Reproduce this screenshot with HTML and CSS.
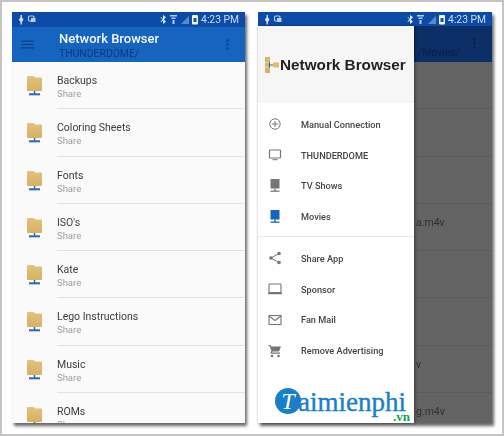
FILE: index.html
```html
<!DOCTYPE html>
<html lang="en">
<head>
<meta charset="utf-8">
<title>Network Browser</title>
<link rel="stylesheet" href="styles.css">
</head>
<body>
<svg class="defs" width="0" height="0" aria-hidden="true">
  <defs>
    <g id="st-left">
      <path d="M2.500 1h1.500v2.500l1.500 2L4 8v2.500H2.500V8L.8 5.500l1.700-2z" fill="#d5e0f0"/>
      <rect x="10.500" y="2" width="5.500" height="5" rx="1" fill="none" stroke="#b9cce8" stroke-width="1.100"/>
      <rect x="13" y="4" width="4.500" height="4" fill="#b9cce8"/>
    </g>
    <g id="st-right">
      <path d="M3 1l3 2.300L3.800 5.500 6 7.700 3 10V6.500L1 8l-.5-.5L2.500 5.500.5 3.500 1 3l2 2z" fill="#e3eaf5"/>
      <path d="M10 1h7v1.500h-7zM11.500 3.500h4v1.500h-4zM12.500 6h2v4h-2z" fill="#b9cce8"/>
      <path d="M21 10l8-8v8z" fill="#5f88c6"/>
      <rect x="32" y="1" width="6" height="9.500" rx="1" fill="#f2f5fa"/>
      <rect x="33.500" y="4" width="3" height="4" fill="#1f4f9f"/>
    </g>
    <linearGradient id="folder-fill" x1="0" y1="0" x2="0" y2="1">
      <stop offset="0" stop-color="#e2c27c"/>
      <stop offset="1" stop-color="#d6b163"/>
    </linearGradient>
    <g id="share-folder">
      <path d="M0 2a1 1 0 0 1 1-1h5.500l1.500 1.500h6a1 1 0 0 1 1 1V15a1 1 0 0 1-1 1H1a1 1 0 0 1-1-1z" fill="url(#folder-fill)"/>
      <rect x="6.800" y="16" width="1.500" height="3" fill="#2a69ad"/>
      <rect x="2" y="18.300" width="11" height="2" fill="#2a69ad"/>
    </g>
    <g id="net-box">
      <rect x="1.500" y="0" width="9" height="9.500"/>
      <rect x="5.300" y="9.500" width="1.400" height="2.500"/>
      <rect x="1.500" y="11.500" width="9" height="1.300"/>
    </g>
  </defs>
</svg>

<main class="frame">
  <section class="phone">
    <div class="status">
      <svg class="st-l" width="22" height="11"><use href="#st-left"/></svg>
      <svg class="st-r" width="38" height="11"><use href="#st-right"/></svg>
      <span class="time">4:23 PM</span>
    </div>
    <header class="appbar">
      <svg class="burger" width="13" height="9" viewBox="0 0 13 9"><path d="M0 .5h13v1.200H0zM0 3.900h13v1.200H0zM0 7.300h13v1.200H0z" fill="#0e3f86"/></svg>
      <div class="titles">
        <div class="title">Network Browser</div>
        <div class="subtitle">THUNDERDOME/</div>
      </div>
      <svg class="more" width="3" height="11" viewBox="0 0 3 11"><circle cx="1.500" cy="1.500" r="1.200" fill="#0e3f86"/><circle cx="1.500" cy="5.500" r="1.200" fill="#0e3f86"/><circle cx="1.500" cy="9.500" r="1.200" fill="#0e3f86"/></svg>
    </header>
    <ul class="list">
      <li class="row"><svg class="folder" width="15" height="21"><use href="#share-folder"/></svg><div class="row-text"><div class="name">Backups</div><div class="sub">Share</div></div></li>
      <li class="row"><svg class="folder" width="15" height="21"><use href="#share-folder"/></svg><div class="row-text"><div class="name">Coloring Sheets</div><div class="sub">Share</div></div></li>
      <li class="row"><svg class="folder" width="15" height="21"><use href="#share-folder"/></svg><div class="row-text"><div class="name">Fonts</div><div class="sub">Share</div></div></li>
      <li class="row"><svg class="folder" width="15" height="21"><use href="#share-folder"/></svg><div class="row-text"><div class="name">ISO's</div><div class="sub">Share</div></div></li>
      <li class="row"><svg class="folder" width="15" height="21"><use href="#share-folder"/></svg><div class="row-text"><div class="name">Kate</div><div class="sub">Share</div></div></li>
      <li class="row"><svg class="folder" width="15" height="21"><use href="#share-folder"/></svg><div class="row-text"><div class="name">Lego Instructions</div><div class="sub">Share</div></div></li>
      <li class="row"><svg class="folder" width="15" height="21"><use href="#share-folder"/></svg><div class="row-text"><div class="name">Music</div><div class="sub">Share</div></div></li>
      <li class="row"><svg class="folder" width="15" height="21"><use href="#share-folder"/></svg><div class="row-text"><div class="name">ROMs</div><div class="sub">Share</div></div></li>
    </ul>
  </section>

  <section class="phone phone-two">
    <div class="status status-two">
      <svg class="st-l" width="22" height="11"><use href="#st-left"/></svg>
      <svg class="st-r" width="38" height="11"><use href="#st-right"/></svg>
      <span class="time">4:23 PM</span>
    </div>
    <div class="stage">
      <header class="appbar dim-bar">
        <div class="dim-sub">/Movies/</div>
        <svg class="more" width="3" height="11" viewBox="0 0 3 11"><circle cx="1.500" cy="1.500" r="1.200" fill="#0a1f44"/><circle cx="1.500" cy="5.500" r="1.200" fill="#0a1f44"/><circle cx="1.500" cy="9.500" r="1.200" fill="#0a1f44"/></svg>
      </header>
      <ul class="list dim-list">
        <li class="row dim-row"></li>
        <li class="row dim-row"></li>
        <li class="row dim-row"></li>
        <li class="row dim-row"><div class="dim-name">a.m4v</div></li>
        <li class="row dim-row"></li>
        <li class="row dim-row"></li>
        <li class="row dim-row"><div class="dim-name">v</div></li>
        <li class="row dim-row"><div class="dim-name">g.m4v</div></li>
      </ul>
      <nav class="drawer">
        <div class="drawer-head">
          <svg class="logo" width="14" height="16" viewBox="0 0 14 16">
            <rect x="0" y="0" width="5" height="5" fill="#d8b565"/>
            <rect x="0" y="11" width="5" height="5" fill="#d8b565"/>
            <rect x="0" y="5.500" width="5" height="5" fill="#d8b565"/>
            <rect x="8" y="5.500" width="6" height="5" fill="#e2bd62"/>
            <path d="M4 7.500h4v1H4z" fill="#2a69ad"/>
            <path d="M4 5v6h1V5z" fill="#2a69ad"/>
          </svg>
          <span class="brand">Network Browser</span>
        </div>
        <ul class="menu">
          <li class="item"><svg class="ico" width="14" height="14" viewBox="0 0 14 14"><circle cx="7" cy="7" r="5.200" fill="none" stroke="#757575"/><path d="M7 4v6M4 7h6" stroke="#757575"/></svg><span>Manual Connection</span></li>
          <li class="item"><svg class="ico" width="14" height="14" viewBox="0 0 14 14"><rect x="1.500" y="2" width="11" height="8" rx=".5" fill="none" stroke="#757575" stroke-width="1.200"/><path d="M4.500 11.700h5" stroke="#757575"/></svg><span>THUNDERDOME</span></li>
          <li class="item"><svg class="ico tint-grey" width="14" height="14" viewBox="-1 0 14 14"><use href="#net-box"/></svg><span>TV Shows</span></li>
          <li class="item"><svg class="ico tint-blue" width="14" height="14" viewBox="-1 0 14 14"><use href="#net-box"/></svg><span>Movies</span></li>
        </ul>
        <ul class="menu menu-two">
          <li class="item"><svg class="ico" width="14" height="14" viewBox="0 0 14 14"><path d="M11 2.500L3 7l8 4.500" fill="none" stroke="#757575"/><circle cx="11" cy="2.500" r="1.800" fill="#757575"/><circle cx="3" cy="7" r="1.800" fill="#757575"/><circle cx="11" cy="11.500" r="1.800" fill="#757575"/></svg><span>Share App</span></li>
          <li class="item"><svg class="ico" width="14" height="14" viewBox="0 0 14 14"><rect x="1" y="2" width="12" height="8.500" rx=".8" fill="none" stroke="#757575" stroke-width="1.100"/><rect x="0" y="10.500" width="14" height="1.800" rx=".6" fill="#757575"/></svg><span>Sponsor</span></li>
          <li class="item"><svg class="ico" width="14" height="14" viewBox="0 0 14 14"><rect x="1" y="2.500" width="12" height="9" fill="none" stroke="#757575" stroke-width="1.100"/><path d="M1 3l6 4.500L13 3" fill="none" stroke="#757575" stroke-width="1.100"/></svg><span>Fan Mail</span></li>
          <li class="item"><svg class="ico" width="14" height="14" viewBox="0 0 14 14"><path d="M.5 1h2l.7 1.500H13l-2 5H4.500L4 8.500h8v1.200H3L2.500 8.500l1-1.500L1.700 2.200H.5z" fill="#757575"/><circle cx="4" cy="12" r="1.300" fill="#757575"/><circle cx="10.500" cy="12" r="1.300" fill="#757575"/></svg><span>Remove Advertising</span></li>
        </ul>
      </nav>
    </div>
  </section>

  <div class="mark">
    <span class="mark-t">T</span><span class="mark-word">aimienphi</span>
    <span class="mark-vn">.vn</span>
  </div>
</main>
</body>
</html>
```
FILE: styles.css
```css
* { box-sizing: border-box; }
html, body { margin: 0; padding: 0; }
body {
  width: 504px;
  height: 436px;
  overflow: hidden;
  background: #c4c4c4;
  padding: 2px;
  font-family: Roboto, "Liberation Sans", sans-serif;
}
.defs { position: absolute; }
ul { list-style: none; margin: 0; padding: 0; }

.frame {
  position: relative;
  display: flex;
  gap: 13px;
  height: 432px;
  padding: 10px 0 0 10px;
  background: #fff;
}
.phone {
  width: 233px;
  height: 411px;
  display: flex;
  flex-direction: column;
  background: #fafafa;
  box-shadow: 2px 3px 3px #666;
  filter: blur(.4px);
}
.phone-two { width: 234px; }

.status {
  flex: none;
  height: 15px;
  display: flex;
  align-items: center;
  padding: 0 6px 0 6px;
  background: #0d4ba8;
}
.status-two { height: 14px; }
.st-l { flex: none; }
.st-r { flex: none; margin-left: auto; margin-right: 3px; }
.time { font-size: 10.300px; color: #d3def0; white-space: nowrap; }

.appbar {
  flex: none;
  height: 35px;
  display: flex;
  align-items: flex-start;
  background: #1565c0;
}
.burger { flex: none; margin: 13px 0 0 9px; }
.titles { flex: 1; min-width: 0; padding: 3px 0 0 25px; }
.title { font-size: 13px; font-weight: 500; line-height: 17px; color: #f4f7fc; white-space: nowrap; }
.subtitle { font-size: 10.400px; line-height: 13px; color: #0d3a7c; white-space: nowrap; }
.more { flex: none; margin: 12px 16px 0 0; }

.list { flex: 1; min-height: 0; overflow: hidden; background: #fafafa; }
.row {
  height: 47.300px;
  display: flex;
  align-items: flex-start;
  padding: 13px 0 0 15px;
  position: relative;
}
.row::after {
  content: "";
  position: absolute;
  left: 45px;
  right: 0;
  bottom: 0;
  height: 1px;
  background: #e2e2e2;
}
.folder { flex: none; }
.row-text { margin: -1px 0 0 15px; }
.name { font-size: 10.500px; line-height: 13px; color: #3c3c3c; }
.sub { font-size: 9.500px; line-height: 13px; color: #a0a0a0; }

.stage { flex: 1; min-height: 0; position: relative; display: flex; flex-direction: column; }
.dim-bar { height: 36px; background: #0b2f66; justify-content: space-between; }
.dim-sub { font-size: 10.400px; line-height: 13px; padding: 20px 0 0 160px; color: #0a1f44; white-space: nowrap; }
.dim-list { background: #636363; }
.dim-row { padding: 12px 0 0 0; }
.dim-row::after { left: 0; background: #5b5b5b; }
.dim-name { font-size: 10.500px; line-height: 13px; padding-left: 158px; color: #2f2f2f; white-space: nowrap; }

.drawer {
  position: absolute;
  top: 0;
  left: 0;
  bottom: 0;
  width: 156px;
  background: #fff;
  box-shadow: 1px 0 3px rgba(0, 0, 0, .45);
}
.drawer-head {
  height: 77px;
  display: flex;
  align-items: center;
  padding: 0 0 0 7px;
  background: #f6f6f6;
  gap: 1px;
}
.logo { flex: none; }
.brand { font-family: "Liberation Sans", Arial, sans-serif; font-weight: 700; font-size: 15.300px; color: #222; white-space: nowrap; }

.menu { padding-top: 6px; height: 134px; border-bottom: 1px solid #e8e8e8; }
.menu-two { border-bottom: 0; padding-top: 6px; height: auto; }
.item {
  height: 30.800px;
  display: flex;
  align-items: center;
  padding-left: 10px;
  font-size: 9.200px;
  color: #444;
  font-weight: 500;
  white-space: nowrap;
}
.ico { flex: none; margin-right: 19px; }
.tint-grey { fill: #757575; }
.tint-blue { fill: #1565c0; }

.mark {
  position: absolute;
  left: 273px;
  top: 386px;
  width: 136px;
  height: 36px;
  font-family: "Liberation Serif", serif;
  white-space: nowrap;
}
.mark-t {
  display: inline-block;
  width: 26px;
  height: 26px;
  border-radius: 50%;
  background: #1a7fc9;
  color: #fff;
  font-size: 24px;
  line-height: 26px;
  text-align: center;
  vertical-align: top;
  font-style: italic;
}
.mark-word {
  display: inline-block;
  vertical-align: top;
  margin: 5px 0 0 -3px;
  font-size: 27px;
  line-height: 18px;
  font-weight: 400;
  -webkit-text-stroke: .4px #1a7fc9;
  color: #1a7fc9;
}
.mark-vn {
  position: absolute;
  right: 1px;
  top: 23px;
  font-size: 13px;
  line-height: 11px;
  font-weight: 700;
  color: #0ba84a;
}
```
